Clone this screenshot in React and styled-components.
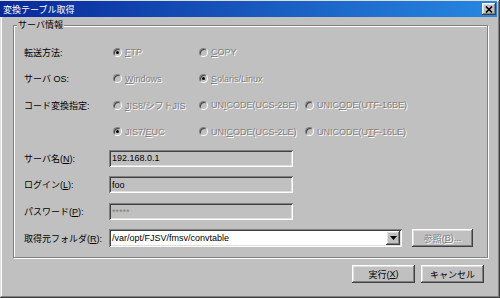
import React from 'react';
import styled, { createGlobalStyle } from 'styled-components';

const Global = createGlobalStyle`
  html, body {
    margin: 0;
    padding: 0;
    background: #c0c0c0;
  }
  body {
    width: 500px;
    height: 298px;
    overflow: hidden;
    font-family: "Liberation Sans", "Noto Sans CJK JP", sans-serif;
    font-size: 9px;
  }
`;

const raised = `
  box-shadow: inset -1px -1px 0 #404040, inset 1px 1px 0 #ffffff,
    inset -2px -2px 0 #808080, inset 2px 2px 0 #dfdfdf;
`;

const sunken = `
  box-shadow: inset 1px 1px 0 #808080, inset -1px -1px 0 #ffffff,
    inset 2px 2px 0 #404040, inset -2px -2px 0 #dfdfdf;
`;

const Window = styled.div`
  width: 500px;
  height: 298px;
  box-sizing: border-box;
  padding: 1px 3px 3px 0;
  background: #c0c0c0;
  box-shadow: inset -1px -1px 0 #404040, inset 1px 1px 0 #dfdfdf,
    inset -2px -2px 0 #808080, inset 2px 2px 0 #ffffff;
  display: flex;
  flex-direction: column;
`;

const TitleBar = styled.div`
  height: 16px;
  flex: none;
  display: flex;
  align-items: center;
  justify-content: space-between;
  padding: 0 1px 0 3px;
  background: linear-gradient(to right, #08289a, #2688e0);
  color: #fff;
  font-size: 9px;
`;

const CloseBtn = styled.div`
  width: 14px;
  height: 12px;
  background: #c0c0c0;
  ${raised}
  display: flex;
  align-items: center;
  justify-content: center;
`;

const Body = styled.div`
  flex: 1;
  display: flex;
  flex-direction: column;
  padding: 8px 9px 0 13px;
`;

const GroupBox = styled.div`
  position: relative;
  border: 1px solid #808080;
  box-shadow: 1px 1px 0 #fff, inset 1px 1px 0 #fff;
  padding: 17px 0 10px 10px;
  display: flex;
  flex-direction: column;
  gap: 8.6px;
`;

const Legend = styled.span`
  position: absolute;
  top: -6px;
  left: 3px;
  padding: 0 1px;
  background: #c0c0c0;
  color: #000;
  line-height: 11px;
`;

const Row = styled.div`
  display: flex;
  align-items: center;
  height: 18px;
`;

const Label = styled.div`
  width: 85px;
  flex: none;
  color: #000;
  white-space: nowrap;
`;

const Key = styled.span`
  text-decoration: underline;
`;

const RadioGrid = styled.div`
  display: grid;
  grid-template-columns: 86px 106px auto;
  align-items: center;
`;

const RadioOption = styled.div`
  display: flex;
  align-items: center;
  gap: 3px;
  padding-left: 4px;
  white-space: nowrap;
  color: #808080;
  text-shadow: 1px 1px 0 #fff;
`;

const RadioMark = styled.span`
  position: relative;
  width: 9px;
  height: 9px;
  flex: none;
  box-sizing: border-box;
  border-radius: 50%;
  border: 1px solid;
  border-color: #808080 #fff #fff #808080;
  background: #c0c0c0;
  box-shadow: inset 1px 1px 0 #404040;
  &::after {
    content: '';
    display: ${(p) => (p.$on ? 'block' : 'none')};
    position: absolute;
    left: 2px;
    top: 2px;
    width: 3px;
    height: 3px;
    border-radius: 50%;
    background: #000;
  }
`;

const TextBox = styled.div`
  width: 184px;
  height: 17px;
  box-sizing: border-box;
  padding: 0 3px;
  display: flex;
  align-items: center;
  background: #c0c0c0;
  color: ${(p) => (p.$dim ? '#808080' : '#000')};
  ${sunken}
`;

const Combo = styled.div`
  width: 293px;
  height: 18px;
  box-sizing: border-box;
  padding: 2px;
  display: flex;
  align-items: center;
  background: #fff;
  ${sunken}
`;

const ComboText = styled.span`
  flex: 1;
  color: #000;
  padding-left: 1px;
`;

const DropBtn = styled.div`
  width: 14px;
  height: 14px;
  background: #c0c0c0;
  ${raised}
  display: flex;
  align-items: center;
  justify-content: center;
`;

const Button = styled.div`
  width: ${(p) => p.$w || 63}px;
  height: 18px;
  box-sizing: border-box;
  display: flex;
  align-items: center;
  justify-content: center;
  background: #c0c0c0;
  ${raised}
  color: ${(p) => (p.$disabled ? '#808080' : '#000')};
  text-shadow: ${(p) => (p.$disabled ? '1px 1px 0 #fff' : 'none')};
  margin-left: ${(p) => p.$ml || 0}px;
`;

const Footer = styled.div`
  display: flex;
  justify-content: flex-end;
  gap: 6px;
  margin-top: 7px;
  padding-right: 4px;
`;

const Radio = ({ on, children }) => (
  <RadioOption>
    <RadioMark $on={on} />
    <span>{children}</span>
  </RadioOption>
);

export default function App() {
  return (
    <>
      <Global />
      <Window>
        <TitleBar>
          <span>変換テーブル取得</span>
          <CloseBtn>
            <svg width="8" height="7" viewBox="0 0 8 7">
              <path d="M1 0.5 L7 6.5 M7 0.5 L1 6.5" stroke="#000" strokeWidth="1.6" />
            </svg>
          </CloseBtn>
        </TitleBar>
        <Body>
          <GroupBox>
            <Legend>サーバ情報</Legend>
            <Row>
              <Label>転送方法:</Label>
              <RadioGrid>
                <Radio on><Key>F</Key>TP</Radio>
                <Radio><Key>C</Key>OPY</Radio>
              </RadioGrid>
            </Row>
            <Row>
              <Label>サーバ OS:</Label>
              <RadioGrid>
                <Radio><Key>W</Key>indows</Radio>
                <Radio on><Key>S</Key>olaris/Linux</Radio>
              </RadioGrid>
            </Row>
            <Row>
              <Label>コード変換指定:</Label>
              <RadioGrid>
                <Radio><Key>J</Key>IS8/シフトJIS</Radio>
                <Radio>UN<Key>I</Key>CODE(UCS-2BE)</Radio>
                <Radio>UNIC<Key>O</Key>DE(UTF-16BE)</Radio>
              </RadioGrid>
            </Row>
            <Row>
              <Label />
              <RadioGrid>
                <Radio on>JIS7/<Key>E</Key>UC</Radio>
                <Radio>UNI<Key>C</Key>ODE(UCS-2LE)</Radio>
                <Radio>UNICODE(U<Key>T</Key>F-16LE)</Radio>
              </RadioGrid>
            </Row>
            <Row>
              <Label>サーバ名(<Key>N</Key>):</Label>
              <TextBox>192.168.0.1</TextBox>
            </Row>
            <Row>
              <Label>ログイン(<Key>L</Key>):</Label>
              <TextBox>foo</TextBox>
            </Row>
            <Row>
              <Label>パスワード(<Key>P</Key>):</Label>
              <TextBox $dim>*****</TextBox>
            </Row>
            <Row>
              <Label>取得元フォルダ(<Key>R</Key>):</Label>
              <Combo>
                <ComboText>/var/opt/FJSV/fmsv/convtable</ComboText>
                <DropBtn>
                  <svg width="7" height="4" viewBox="0 0 7 4">
                    <path d="M0 0 H7 L3.5 4 Z" fill="#000" />
                  </svg>
                </DropBtn>
              </Combo>
              <Button $w={61} $ml={10} $disabled>
                参照(<Key>B</Key>)...
              </Button>
            </Row>
          </GroupBox>
          <Footer>
            <Button>実行(<Key>X</Key>)</Button>
            <Button>キャンセル</Button>
          </Footer>
        </Body>
      </Window>
    </>
  );
}
